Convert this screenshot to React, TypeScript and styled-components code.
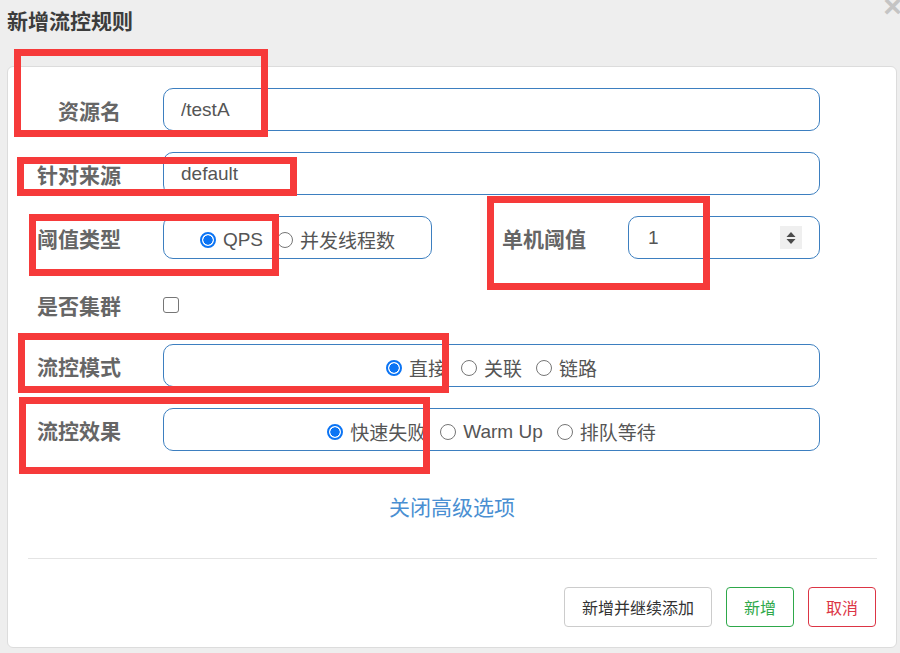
import React from 'react';
import styled, { createGlobalStyle } from 'styled-components';

const GlobalStyle = createGlobalStyle`
  html, body {
    margin: 0;
    padding: 0;
    background: #eeeeee;
  }
  body {
    font-family: 'Liberation Sans', 'Noto Sans CJK SC', sans-serif;
  }
  * {
    box-sizing: border-box;
  }
`;

const Page = styled.div`
  position: relative;
  width: 900px;
  height: 653px;
  overflow: hidden;
  padding: 0 3px 0 7px;
  background: #eeeeee;
`;

const Header = styled.div`
  height: 66px;
  display: flex;
  align-items: flex-start;
  padding-top: 8px;
`;

const Title = styled.h4`
  margin: 0;
  font-size: 21px;
  line-height: 28px;
  font-weight: bold;
  color: #3c3c3c;
`;

const Close = styled.span`
  position: absolute;
  top: -10px;
  right: -2px;
  font-size: 32px;
  font-weight: bold;
  color: #c4c4c4;
  line-height: 32px;
`;

const Card = styled.div`
  background: #ffffff;
  border: 1px solid #dcdcdc;
  border-radius: 6px;
  padding: 21px 0 20px 0;
  display: flex;
  flex-direction: column;
`;

const Form = styled.div`
  display: flex;
  flex-direction: column;
  gap: 21px;
`;

const Row = styled.div<{ $shift?: number }>`
  display: flex;
  align-items: center;
  height: 43px;
  padding-top: ${(p) => p.$shift ?? 0}px;
`;

const Label = styled.label<{ $width: number }>`
  width: ${(p) => p.$width}px;
  flex-shrink: 0;
  padding-right: 42px;
  padding-top: 1px;
  text-align: right;
  font-size: 21px;
  font-weight: bold;
  color: #666666;
`;

const TextInput = styled.input<{ $width: number }>`
  width: ${(p) => p.$width}px;
  height: 43px;
  border: 1px solid #3d7fc0;
  border-radius: 10px;
  padding: 0 17px;
  font-family: inherit;
  font-size: 19px;
  color: #555555;
  outline: none;
  background: #ffffff;
`;

const NumberBox = styled.div`
  width: 192px;
  height: 43px;
  border: 1px solid #3d7fc0;
  border-radius: 10px;
  display: flex;
  align-items: center;
  padding: 0 17px 0 19px;
`;

const NumberInput = styled.input`
  flex: 1;
  min-width: 0;
  border: none;
  outline: none;
  padding: 0;
  font-family: inherit;
  font-size: 19px;
  color: #555555;
`;

const Spinner = styled.span`
  width: 22px;
  height: 23px;
  background: #efefef;
  display: flex;
  align-items: center;
  justify-content: center;
`;

const RadioBox = styled.div<{ $width: number }>`
  width: ${(p) => p.$width}px;
  height: 43px;
  border: 1px solid #3d7fc0;
  border-radius: 10px;
  display: flex;
  align-items: center;
  justify-content: center;
  padding-top: 4px;
`;

const Option = styled.label`
  display: inline-flex;
  align-items: center;
  gap: 7px;
  font-size: 19px;
  color: #555555;
  margin-left: 14px;
  &:first-child {
    margin-left: 0;
  }
`;

const Radio = styled.input.attrs({ type: 'radio' })`
  appearance: none;
  -webkit-appearance: none;
  width: 16px;
  height: 16px;
  margin: 0;
  border-radius: 50%;
  border: 1.3px solid #767676;
  background: #ffffff;
  flex-shrink: 0;
  &:checked {
    border: 2px solid #0b74f4;
    background: radial-gradient(circle, #0b74f4 0 4.4px, #ffffff 4.9px);
  }
`;

const Check = styled.input.attrs({ type: 'checkbox' })`
  appearance: none;
  -webkit-appearance: none;
  width: 16px;
  height: 16px;
  margin: 0;
  border: 1.3px solid #767676;
  border-radius: 3px;
  background: #ffffff;
`;

const ToggleLink = styled.a`
  display: block;
  margin-top: 42px;
  text-align: center;
  font-size: 21px;
  line-height: 30px;
  color: #4a8fd2;
  cursor: pointer;
`;

const Divider = styled.hr`
  margin: 35px 19px 0 20px;
  border: none;
  border-top: 1px solid #e4e4e4;
  height: 0;
`;

const Footer = styled.div`
  display: flex;
  justify-content: flex-end;
  gap: 14px;
  margin-top: 28px;
  padding-right: 20px;
`;

const Button = styled.button<{ $tone: 'plain' | 'success' | 'danger' }>`
  height: 40px;
  padding: 0 17px;
  border-radius: 4px;
  background: #ffffff;
  font-family: inherit;
  font-size: 16px;
  border: 1px solid
    ${(p) => (p.$tone === 'success' ? '#2ea84a' : p.$tone === 'danger' ? '#dc3545' : '#cccccc')};
  color: ${(p) => (p.$tone === 'success' ? '#2ea84a' : p.$tone === 'danger' ? '#dc3545' : '#333333')};
`;

const Annotation = styled.div<{ $x: number; $y: number; $w: number; $h: number }>`
  position: absolute;
  left: ${(p) => p.$x}px;
  top: ${(p) => p.$y}px;
  width: ${(p) => p.$w}px;
  height: ${(p) => p.$h}px;
  border: 7px solid #f63a3a;
  pointer-events: none;
`;

const marks = [
  { x: 14, y: 49, w: 254, h: 88 },
  { x: 17, y: 157, w: 280, h: 39 },
  { x: 29, y: 214, w: 250, h: 62 },
  { x: 487, y: 196, w: 223, h: 94 },
  { x: 18, y: 333, w: 431, h: 60 },
  { x: 19, y: 397, w: 411, h: 77 },
];

const App = () => {
  return (
    <Page>
      <GlobalStyle />
      <Header>
        <Title>新增流控规则</Title>
        <Close>×</Close>
      </Header>
      <Card>
        <Form>
          <Row>
            <Label $width={155}>资源名</Label>
            <TextInput $width={657} defaultValue="/testA" />
          </Row>
          <Row>
            <Label $width={155}>针对来源</Label>
            <TextInput $width={657} defaultValue="default" />
          </Row>
          <Row>
            <Label $width={155}>阈值类型</Label>
            <RadioBox $width={269}>
              <Option>
                <Radio name="grade" defaultChecked />
                QPS
              </Option>
              <Option>
                <Radio name="grade" />
                并发线程数
              </Option>
            </RadioBox>
            <Label $width={196}>单机阈值</Label>
            <NumberBox>
              <NumberInput defaultValue="1" />
              <Spinner>
                <svg width="12" height="16" viewBox="0 0 12 16">
                  <path d="M1.5 7 L6 2 L10.5 7 Z" fill="#4a4a4a" />
                  <path d="M1.5 9 L6 14 L10.5 9 Z" fill="#4a4a4a" />
                </svg>
              </Spinner>
            </NumberBox>
          </Row>
          <Row $shift={6}>
            <Label $width={155}>是否集群</Label>
            <Check />
          </Row>
          <Row>
            <Label $width={155}>流控模式</Label>
            <RadioBox $width={657}>
              <Option>
                <Radio name="strategy" defaultChecked />
                直接
              </Option>
              <Option>
                <Radio name="strategy" />
                关联
              </Option>
              <Option>
                <Radio name="strategy" />
                链路
              </Option>
            </RadioBox>
          </Row>
          <Row>
            <Label $width={155}>流控效果</Label>
            <RadioBox $width={657}>
              <Option>
                <Radio name="behavior" defaultChecked />
                快速失败
              </Option>
              <Option>
                <Radio name="behavior" />
                Warm Up
              </Option>
              <Option>
                <Radio name="behavior" />
                排队等待
              </Option>
            </RadioBox>
          </Row>
        </Form>
        <ToggleLink>关闭高级选项</ToggleLink>
        <Divider />
        <Footer>
          <Button $tone="plain">新增并继续添加</Button>
          <Button $tone="success">新增</Button>
          <Button $tone="danger">取消</Button>
        </Footer>
      </Card>
      {marks.map((m, i) => (
        <Annotation key={i} $x={m.x} $y={m.y} $w={m.w} $h={m.h} />
      ))}
    </Page>
  );
};

export default App;
